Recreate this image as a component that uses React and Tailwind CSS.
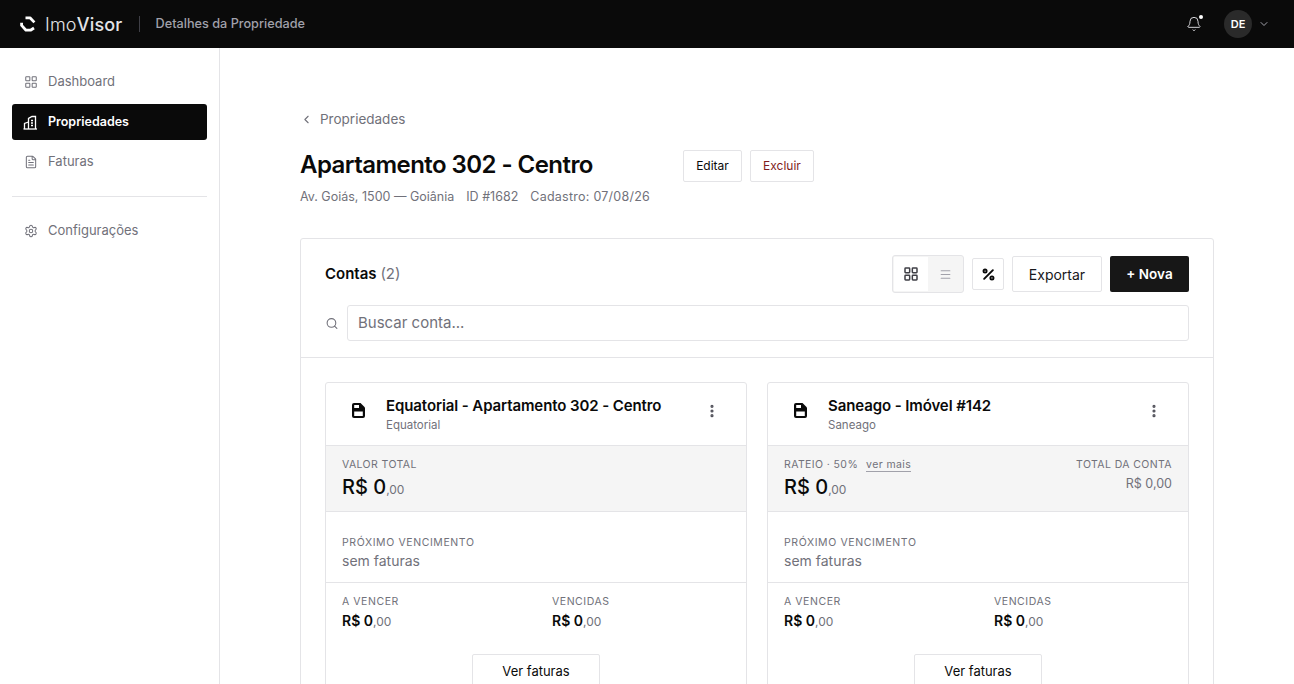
import { Bell, ChevronDown, ChevronLeft, EllipsisVertical, FileText, LayoutGrid, Menu, Percent, Search, Settings } from 'lucide-react';

const font = { fontFamily: 'Inter, sans-serif' };

function Logo() {
    return (
        <svg width="16" height="16" viewBox="0 0 16 16" fill="none" stroke="#ffffff" strokeWidth="2.8" strokeLinejoin="round">
            <path d="M5.5 1.8H10L14.4 6.4" />
            <path d="M1.6 6.8V9.4L6 14.2H10.5L14 12" />
        </svg>
    );
}

function BuildingIcon() {
    return (
        <svg width="15" height="15" viewBox="0 0 15 15" fill="none" stroke="#ffffff" strokeWidth="1.3">
            <path d="M5.5 14V3.5L9 1.5H12.5V14" />
            <path d="M1.5 14V8.5L5.5 7" />
            <path d="M0.5 14H14" />
            <path d="M8 5.5H10M8 8H10M8 10.5H10" strokeWidth="1.4" />
        </svg>
    );
}

function DocIcon() {
    return (
        <svg width="13" height="15" viewBox="0 0 13 15">
            <path d="M0 2A2 2 0 0 1 2 0H8.5L13 4.5V13A2 2 0 0 1 11 15H2A2 2 0 0 1 0 13Z" fill="#0a0a0a" />
            <path d="M2.2 2H7V5H2.2Z" fill="#ffffff" />
            <path d="M2.2 8.5H10.8V13H2.2Z" fill="#ffffff" />
        </svg>
    );
}

function SideItem({ icon: Icon, label, active }) {
    return (
        <div className={active
            ? 'flex items-center gap-[10px] h-9 pl-[11px] pr-3 rounded-[3px] bg-[#0a0a0a] text-white text-[12.5px] font-semibold'
            : 'flex items-center gap-[10px] h-9 pl-3 pr-3 rounded-[3px] text-[#71717a] text-[13px]'}>
            {active ? <BuildingIcon /> : <Icon size={14} strokeWidth={1.75} className="text-[#71717a]" />}
            <span>{label}</span>
        </div>
    );
}

function Money({ size, cents }) {
    return (
        <span className={size}>
            R$ 0<span className={cents}>,00</span>
        </span>
    );
}

function AccountCard({ title, subtitle, rateio }) {
    return (
        <div className="border border-[#e4e4e7] rounded-t-[3px] bg-white pb-4">
            <div className="flex h-[63px] pl-[26px] pr-[26px] border-b border-[#e4e4e7]">
                <div className="pt-5 w-[34px] shrink-0"><DocIcon /></div>
                <div className="flex-1 pt-[13px]">
                    <div className="text-[15px] leading-[20px] font-semibold tracking-[-0.1px] text-[#0a0a0a]">{title}</div>
                    <div className="text-[11.5px] leading-[18px] text-[#71717a]">{subtitle}</div>
                </div>
                <EllipsisVertical size={16} strokeWidth={2.75} className="mt-5 text-[#52525b]" />
            </div>

            <div className="flex justify-between h-[66px] px-4 pt-[11px] bg-[#f5f5f5] border-b border-[#e4e4e7]">
                <div>
                    {rateio ? (
                        <div className="text-[10.5px] leading-[16px] tracking-[0.4px] text-[#71717a]">
                            RATEIO · 50%
                            <span className="ml-2 border-b border-[#a1a1aa]">ver mais</span>
                        </div>
                    ) : (
                        <div className="text-[10.5px] leading-[16px] tracking-[0.4px] text-[#71717a]">VALOR TOTAL</div>
                    )}
                    <div className="mt-px leading-[26px]">
                        <Money size="text-[20px] font-medium text-[#0a0a0a]" cents="text-[12px] font-normal text-[#71717a]" />
                    </div>
                </div>
                {rateio && (
                    <div className="text-right">
                        <div className="text-[10.5px] leading-[16px] tracking-[0.4px] text-[#71717a]">TOTAL DA CONTA</div>
                        <div className="text-[12.5px] leading-[22px] text-[#71717a]">R$ 0,00</div>
                    </div>
                )}
            </div>

            <div className="h-[71px] px-4 pt-[23px] border-b border-[#e4e4e7]">
                <div className="text-[10.5px] leading-[16px] tracking-[0.6px] text-[#71717a]">PRÓXIMO VENCIMENTO</div>
                <div className="text-[14px] leading-[20px] text-[#71717a]">sem faturas</div>
            </div>

            <div className="grid grid-cols-2 gap-8 px-4 pt-[11px]">
                <div>
                    <div className="text-[10.5px] leading-[16px] tracking-[0.55px] text-[#71717a]">A VENCER</div>
                    <div className="leading-[20px]">
                        <Money size="text-[14px] font-semibold text-[#0a0a0a]" cents="text-[12px] font-normal text-[#71717a]" />
                    </div>
                </div>
                <div>
                    <div className="text-[10.5px] leading-[16px] tracking-[0.55px] text-[#71717a]">VENCIDAS</div>
                    <div className="leading-[20px]">
                        <Money size="text-[14px] font-semibold text-[#0a0a0a]" cents="text-[12px] font-normal text-[#71717a]" />
                    </div>
                </div>
            </div>

            <div className="flex justify-center pt-[22px]">
                <button className="w-[128px] h-9 border border-[#e4e4e7] rounded-[2px] text-[13px] text-[#0a0a0a] bg-white">Ver faturas</button>
            </div>
        </div>
    );
}

export default function App() {
    return (
        <div style={font} className="h-screen overflow-hidden flex flex-col bg-white">
            {/* Header */}
            <header className="h-12 shrink-0 bg-[#0a0a0a] flex items-center pl-5 pr-6">
                <Logo />
                <span className="ml-[9px] text-[18px] tracking-[0.2px] text-[#e4e4e7] font-light">Imo<span className="font-medium">Visor</span></span>
                <div className="ml-4 mr-4 w-px h-4 bg-[#3f3f46]" />
                <span className="text-[12.7px] font-medium text-[#a1a1aa]">Detalhes da Propriedade</span>
                <div className="ml-auto flex items-center">
                    <div className="relative mr-[22px]">
                        <Bell size={16} strokeWidth={1.5} className="text-[#d4d4d8]" />
                        <span className="absolute -top-[1px] -right-[1px] w-1 h-1 rounded-full bg-white" />
                    </div>
                    <div className="w-7 h-7 rounded-full bg-[#2a2a2a] flex items-center justify-center text-[11px] font-semibold text-white">DE</div>
                    <ChevronDown size={12} strokeWidth={2} className="ml-[6px] text-[#a1a1aa]" />
                </div>
            </header>

            <div className="flex-1 flex min-h-0">
                {/* Sidebar */}
                <aside className="w-[220px] shrink-0 border-r border-[#e4e4e7] px-3 pt-4">
                    <nav className="flex flex-col gap-1">
                        <SideItem icon={LayoutGrid} label="Dashboard" />
                        <SideItem active label="Propriedades" />
                        <SideItem icon={FileText} label="Faturas" />
                    </nav>
                    <div className="mt-4 mb-4 border-t border-[#e4e4e7]" />
                    <SideItem icon={Settings} label="Configurações" />
                </aside>

                {/* Main */}
                <main className="flex-1 min-w-0 pl-20 pr-20 pt-[60px]">
                    <div className="flex items-center gap-[7px] h-[22px] text-[13.5px] text-[#71717a]">
                        <ChevronLeft size={13} />
                        <span>Propriedades</span>
                    </div>

                    <div className="flex items-start mt-5 h-[32px]">
                        <h1 className="w-[383px] text-[24px] leading-[30px] font-semibold text-[#0a0a0a] tracking-[-0.55px]">Apartamento 302 - Centro</h1>
                        <button className="w-[59px] h-8 border border-[#e4e4e7] rounded-[2px] text-[12px] text-[#0a0a0a]">Editar</button>
                        <button className="ml-2 w-[64px] h-8 border border-[#e4e4e7] rounded-[2px] text-[12px] text-[#7f1d1d]">Excluir</button>
                    </div>

                    <div className="flex gap-3 mt-[5px] text-[12.5px] leading-[20px] text-[#71717a]">
                        <span>Av. Goiás, 1500 — Goiânia</span>
                        <span>ID #1682</span>
                        <span className="tracking-[0.25px]">Cadastro: 07/08/26</span>
                    </div>

                    {/* Contas */}
                    <section className="mt-[31px] border border-[#e4e4e7] rounded-t-[3px]">
                        <div className="px-6 pt-4 pb-4 border-b border-[#e4e4e7]">
                            <div className="flex items-center justify-between h-[38px]">
                                <div className="mt-px text-[15px] font-semibold text-[#0a0a0a]">
                                    Contas <span className="font-normal text-[#71717a]">(2)</span>
                                </div>
                                <div className="flex items-center">
                                    <div className="flex w-[72px] h-[38px] p-px border border-[#e4e4e7] rounded-[3px] bg-[#f5f5f5]">
                                        <div className="w-[34px] bg-white flex items-center justify-center">
                                            <LayoutGrid size={16} strokeWidth={2.25} className="text-[#3f3f46]" />
                                        </div>
                                        <div className="flex-1 flex items-center justify-center">
                                            <Menu size={13} className="text-[#a1a1aa]" />
                                        </div>
                                    </div>
                                    <div className="ml-2 w-8 h-8 border border-[#e4e4e7] rounded-[2px] flex items-center justify-center">
                                        <Percent size={15} strokeWidth={3} className="text-[#0a0a0a]" />
                                    </div>
                                    <button className="ml-2 w-[90px] h-9 border border-[#e4e4e7] rounded-[2px] text-[14px] text-[#18181b]">Exportar</button>
                                    <button className="ml-2 w-[79px] h-9 rounded-[2px] bg-[#171717] text-[13.5px] font-semibold text-white">+ Nova</button>
                                </div>
                            </div>
                            <div className="flex items-center mt-3">
                                <Search size={13} className="w-[22px] shrink-0 text-[#71717a] -ml-[4px] mr-[4px]" />
                                <div className="flex-1 h-9 border border-[#e4e4e7] rounded-[3px] px-[10px] flex items-center text-[15px] text-[#71717a]">Buscar conta...</div>
                            </div>
                        </div>

                        <div className="grid grid-cols-2 gap-5 px-6 pt-6">
                            <AccountCard title="Equatorial - Apartamento 302 - Centro" subtitle="Equatorial" />
                            <AccountCard title="Saneago - Imóvel #142" subtitle="Saneago" rateio />
                        </div>
                    </section>
                </main>
            </div>
        </div>
    );
}
